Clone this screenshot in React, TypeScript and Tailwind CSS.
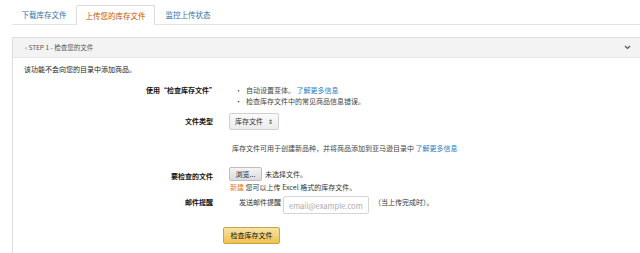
import React from "react";

function Label({ children }: { children: React.ReactNode }) {
  return (
    <div className="w-[200px] shrink-0 text-right font-bold text-[#111]">
      {children}
    </div>
  );
}

function App() {
  return (
    <div
      className="w-[640px] h-[253px] bg-white overflow-hidden text-[7px] leading-[11px] text-[#333]"
      style={{ fontFamily: '"Noto Sans CJK SC", "Noto Sans", sans-serif' }}
    >
      {/* tabs */}
      <div className="flex items-end h-[25px] pt-[5px] ml-[12px] border-b border-[#e3e3e3] text-[7.5px]">
        <div className="w-[64px] h-[20px] flex items-center justify-center text-[#3b6ea5]">
          下载库存文件
        </div>
        <div className="w-[79px] h-[20px] flex items-center justify-center text-[#c45500] bg-white border border-b-0 border-[#dcdcdc] rounded-t-[2px] -mb-px">
          上传您的库存文件
        </div>
        <div className="w-[66px] h-[20px] flex items-center justify-center text-[#3b6ea5]">
          监控上传状态
        </div>
      </div>

      {/* panel */}
      <div className="ml-[12px] mt-[12px] border-l border-t border-[#dedede] h-[220px]">
        <div className="h-[20px] bg-[#f3f3f3] border-b border-[#e6e6e6] flex items-center justify-between pl-[12px] pr-[9px] text-[6.5px] text-[#555]">
          <span>‹ STEP 1 - 检查您的文件</span>
          <svg width="7" height="5" viewBox="0 0 7 5">
            <path d="M1 1 L3.5 3.5 L6 1" fill="none" stroke="#555" strokeWidth="1.2" />
          </svg>
        </div>

        <div className="pl-[11px] pt-[6px] text-[#222]">该功能不会向您的目录中添加商品。</div>

        <div className="mt-[10px] flex">
          <Label>
            <span className="mr-[-3px]">使用“检查库存文件”</span>
          </Label>
          <div className="ml-[22px] text-[#444]">
            <div className="flex gap-[4px]">
              <span>•</span>
              <span>
                自动设置变体。 <span className="text-[#2d7fc1]">了解更多信息</span>
              </span>
            </div>
            <div className="flex gap-[4px]">
              <span>•</span>
              <span>检查库存文件中的常见商品信息错误。</span>
            </div>
          </div>
        </div>

        <div className="mt-[6px] flex items-center">
          <Label>文件类型</Label>
          <div className="ml-[16px] h-[17px] px-[5px] flex items-center gap-[5px] border border-[#cfcfcf] rounded-[2px] bg-gradient-to-b from-[#fafafa] to-[#ececec] text-[#333]">
            库存文件 <span className="text-[6px] leading-none">⇕</span>
          </div>
        </div>

        <div className="mt-[13px] ml-[219px] text-[#444]">
          库存文件可用于创建新品种，并将商品添加到亚马逊目录中 <span className="text-[#2d7fc1]">了解更多信息</span>
        </div>

        <div className="mt-[13px] flex">
          <Label>
            <div className="pt-[4px]">要检查的文件</div>
          </Label>
          <div className="ml-[16px]">
            <div className="flex items-center gap-[3px]">
              <div className="h-[14px] w-[33px] flex items-center justify-center border border-[#bdbdbd] rounded-[2px] bg-gradient-to-b from-[#f4f4f4] to-[#dcdcdc] text-[#222]">
                浏览...
              </div>
              <span className="text-[#333]">未选择文件。</span>
            </div>
            <div className="mt-[1px] pl-[1px] text-[#333]">
              <span className="text-[#e47911]">新建</span> 您可以上传 Excel 格式的库存文件。
            </div>
          </div>
        </div>

        <div className="mt-[3px] flex">
          <Label>
            <div className="pt-[1px]">邮件提醒</div>
          </Label>
          <div className="ml-[26px] flex items-start text-[#333]">
            <span className="pt-[1px]">发送邮件提醒</span>
            <div className="ml-[2px] h-[18px] w-[86px] px-[5px] flex items-center border border-[#d5d5d5] rounded-[2px] text-[#aaa] text-[7.5px]">
              email@example.com
            </div>
            <span className="ml-[5px] pt-[1px]">（当上传完成时）。</span>
          </div>
        </div>

        <div className="mt-[13px] ml-[210px]">
          <div className="inline-flex h-[17px] w-[57px] items-center justify-center border border-[#c8a443] rounded-[2px] bg-gradient-to-b from-[#f8e3a4] to-[#f0c14b] text-[#111]">
            检查库存文件
          </div>
        </div>
      </div>
    </div>
  );
}

export default App;
